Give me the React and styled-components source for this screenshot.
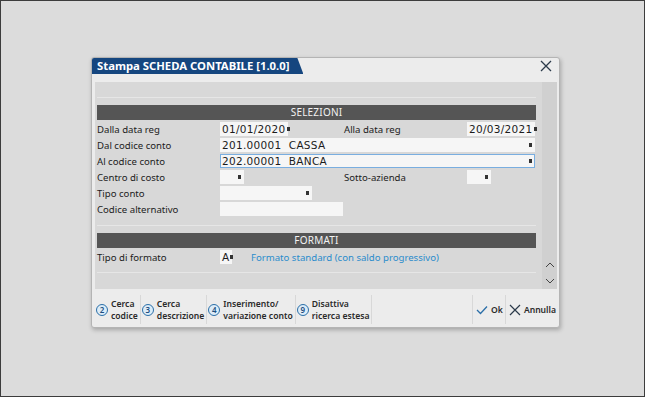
import React from 'react';
import styled, { createGlobalStyle } from 'styled-components';

const GlobalStyle = createGlobalStyle`
  body {
    margin: 0;
    background: #dcdcdc;
    font-family: 'Noto Sans', 'Open Sans', sans-serif;
  }
`;

const Screen = styled.div`
  width: 645px;
  height: 397px;
  box-sizing: border-box;
  border: 1px solid #3c3c3c;
  background: #dcdcdc;
  display: flex;
  justify-content: flex-start;
  align-items: flex-start;
  padding: 56px 0 0 90px;
`;

const Dialog = styled.div`
  width: 469px;
  height: 271px;
  box-sizing: border-box;
  background: #ececec;
  border: 1px solid #b4b4b4;
  border-radius: 3px;
  box-shadow: 1px 2px 4px rgba(0, 0, 0, 0.25);
  display: flex;
  flex-direction: column;
  overflow: hidden;
`;

const TitleRow = styled.div`
  height: 16px;
  display: flex;
  justify-content: space-between;
  align-items: stretch;
`;

const TitleTab = styled.div`
  background: #15467f;
  color: #fff;
  font-size: 11.3px;
  font-weight: 700;
  line-height: 16px;
  padding: 0 14px 0 5px;
  clip-path: polygon(0 0, calc(100% - 6px) 0, 100% 100%, 0 100%);
  white-space: nowrap;
`;

const Close = styled.button`
  border: none;
  background: transparent;
  width: 20px;
  height: 16px;
  padding: 0;
  margin: 0 3px 0 0;
  display: flex;
  align-items: center;
  justify-content: center;
`;

const Panel = styled.div`
  margin: 8px 2px 0 3px;
  height: 207px;
  background: #d8d8d8;
  display: flex;
`;

const Content = styled.div`
  flex: 1;
  padding: 15px 6px 0 2px;
  display: flex;
  flex-direction: column;
`;

const Rule = styled.div`
  height: 1px;
  background: #e6e6e6;
  margin-bottom: ${p => p.$after || 0}px;
`;

const SectionHeader = styled.div`
  height: 15px;
  background: #555;
  color: #f2f2f2;
  font-size: 10px;
  line-height: 15px;
  text-align: center;
  letter-spacing: 0.2px;
  margin-bottom: 1px;
`;

const Row = styled.div`
  height: 16px;
  display: flex;
  align-items: center;
  font-size: 9.6px;
  color: #1c1c1c;
`;

const Label = styled.div`
  width: ${p => p.$w || 123}px;
  flex: none;
  white-space: nowrap;
  margin-left: ${p => p.$ml || 0}px;
`;

const Field = styled.div`
  width: ${p => p.$w}px;
  height: 14px;
  box-sizing: border-box;
  background: #f6f6f6;
  border: 1px solid ${p => (p.$focus ? '#79aee0' : 'transparent')};
  display: flex;
  align-items: center;
  justify-content: ${p => (p.$end ? 'flex-end' : 'space-between')};
  padding: 0 2px 0 1px;
  font-family: 'DejaVu Sans', sans-serif;
  font-size: 10.5px;
  letter-spacing: 0.3px;
  color: #1c1c1c;
  flex: none;
  white-space: pre;
`;

const Marker = styled.span`
  width: 3px;
  height: 4px;
  background: #333;
  flex: none;
  margin-left: 1px;
`;

const Spacer = styled.div`
  flex: 1;
`;

const Link = styled.span`
  color: #2a8ccc;
  font-size: 9.6px;
  margin-left: 19px;
`;

const Scroll = styled.div`
  width: 15px;
  background: #d0d0d0;
  display: flex;
  flex-direction: column;
  justify-content: flex-end;
  align-items: center;
  padding-bottom: 5px;
  gap: 10px;
`;

const Footer = styled.div`
  flex: 1;
  display: flex;
  align-items: stretch;
  padding: 6px 0 3px 3px;
`;

const FButton = styled.div`
  display: flex;
  align-items: center;
  gap: 3px;
  padding: 0 2px 0 1px;
  border-right: 1px solid ${p => (p.$noline ? 'transparent' : '#d8d8d8')};
  font-size: 8.6px;
  font-weight: 600;
  line-height: 12px;
  color: #2a2a2a;
  white-space: nowrap;
`;

const Num = styled.span`
  width: 10px;
  height: 10px;
  border-radius: 50%;
  border: 1px solid #2b6fa8;
  background: #dcecf8;
  color: #1c4e7f;
  font-size: 8px;
  font-weight: 600;
  line-height: 10px;
  text-align: center;
  flex: none;
`;

const Key = ({ n, top, bottom }) => (
  <FButton>
    <Num>{n}</Num>
    <div>
      {top}
      <br />
      {bottom}
    </div>
  </FButton>
);

const Chevron = ({ up }) => (
  <svg width="10" height="6" viewBox="0 0 10 6">
    <path
      d={up ? 'M1 5 L5 1 L9 5' : 'M1 1 L5 5 L9 1'}
      fill="none"
      stroke="#444"
      strokeWidth="1"
    />
  </svg>
);

export default function App() {
  return (
    <Screen>
      <GlobalStyle />
      <Dialog>
        <TitleRow>
          <TitleTab>Stampa SCHEDA CONTABILE [1.0.0]</TitleTab>
          <Close>
            <svg width="12" height="12" viewBox="0 0 12 12">
              <path d="M1 1 L11 11 M11 1 L1 11" stroke="#2b3a4a" strokeWidth="1.3" />
            </svg>
          </Close>
        </TitleRow>
        <Panel>
          <Content>
            <Rule $after={7} />
            <SectionHeader>SELEZIONI</SectionHeader>
            <Row>
              <Label>Dalla data reg</Label>
              <Field $w={68}>01/01/2020<Marker /></Field>
              <Label $ml={56}>Alla data reg</Label>
              <Field $w={68}>20/03/2021<Marker /></Field>
            </Row>
            <Row>
              <Label>Dal codice conto</Label>
              <Field $w={315}>201.00001  CASSA<Marker /></Field>
            </Row>
            <Row>
              <Label>Al codice conto</Label>
              <Field $w={315} $focus>202.00001  BANCA<Marker /></Field>
            </Row>
            <Row>
              <Label>Centro di costo</Label>
              <Field $w={24} $end><Marker /></Field>
              <Label $ml={100}>Sotto-azienda</Label>
              <Field $w={24} $end><Marker /></Field>
            </Row>
            <Row>
              <Label>Tipo conto</Label>
              <Field $w={92} $end><Marker /></Field>
            </Row>
            <Row>
              <Label>Codice alternativo</Label>
              <Field $w={123} />
            </Row>
            <Rule $after={7} style={{ marginTop: 8 }} />
            <SectionHeader>FORMATI</SectionHeader>
            <Row>
              <Label>Tipo di formato</Label>
              <Field $w={12}>A<Marker /></Field>
              <Link>Formato standard (con saldo progressivo)</Link>
            </Row>
            <Rule style={{ marginTop: 7 }} />
            <Spacer />
          </Content>
          <Scroll>
            <Chevron up />
            <Chevron />
          </Scroll>
        </Panel>
        <Footer>
          <Key n="2" top="Cerca" bottom="codice" />
          <Key n="3" top="Cerca" bottom="descrizione" />
          <Key n="4" top="Inserimento/" bottom="variazione conto" />
          <Key n="9" top="Disattiva" bottom="ricerca estesa" />
          <Spacer />
          <FButton style={{ borderLeft: '1px solid #d8d8d8', padding: '0 2px 0 3px' }}>
            <svg width="12" height="10" viewBox="0 0 12 10">
              <path d="M1 5 L4.5 8.5 L11 1.5" fill="none" stroke="#2b6fa8" strokeWidth="1.3" />
            </svg>
            Ok
          </FButton>
          <FButton $noline style={{ padding: '0 2px 0 3px' }}>
            <svg width="12" height="12" viewBox="0 0 12 12">
              <path d="M1 1 L11 11 M11 1 L1 11" stroke="#2b3a4a" strokeWidth="1.2" />
            </svg>
            Annulla
          </FButton>
        </Footer>
      </Dialog>
    </Screen>
  );
}
